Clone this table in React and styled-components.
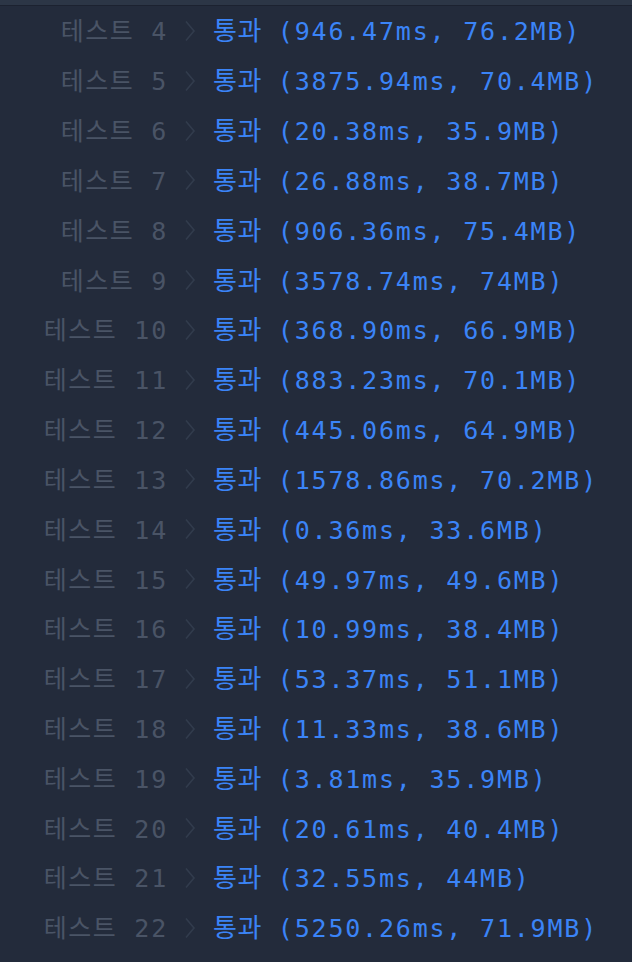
import React from "react";
import styled, { createGlobalStyle } from "styled-components";

const Global = createGlobalStyle`
  html, body { margin: 0; padding: 0; background: #232b3b; }
  body { font-family: "DejaVu Sans Mono", "Noto Sans CJK KR", monospace; }
`;

const Page = styled.div`
  width: 632px;
  min-height: 962px;
  background: #232b3b;
  overflow: hidden;
`;

const TopStrip = styled.div`
  height: 5px;
  background: #2c3646;
  border-bottom: 1px solid #1c2230;
`;

const List = styled.div`
  display: flex;
  flex-direction: column;
`;

const Row = styled.div`
  box-sizing: border-box;
  display: flex;
  align-items: center;
  height: 49.83px;
  font-size: 25px;
  line-height: 44px;
  white-space: nowrap;
`;

const Label = styled.div`
  width: 168px;
  flex: none;
  display: flex;
  justify-content: flex-end;
  align-items: baseline;
  color: #4a5466;
  letter-spacing: 1.8px;
`;

const Ko = styled.span`
  font-family: "Noto Sans CJK KR", sans-serif;
  font-size: ${(p) => p.$size ?? 24}px;
  letter-spacing: ${(p) => p.$ls ?? 1}px;
  margin-right: ${(p) => p.$mr ?? 0}px;
`;

const Chevron = styled.svg`
  width: 12px;
  height: 22px;
  margin: 0 17px 0 16px;
  flex: none;
`;

const Status = styled.div`
  display: flex;
  align-items: baseline;
  color: #3b84f7;
`;

const Detail = styled.span`
  letter-spacing: 1.8px;
`;

const rows = [
  [4, "946.47ms, 76.2MB"],
  [5, "3875.94ms, 70.4MB"],
  [6, "20.38ms, 35.9MB"],
  [7, "26.88ms, 38.7MB"],
  [8, "906.36ms, 75.4MB"],
  [9, "3578.74ms, 74MB"],
  [10, "368.90ms, 66.9MB"],
  [11, "883.23ms, 70.1MB"],
  [12, "445.06ms, 64.9MB"],
  [13, "1578.86ms, 70.2MB"],
  [14, "0.36ms, 33.6MB"],
  [15, "49.97ms, 49.6MB"],
  [16, "10.99ms, 38.4MB"],
  [17, "53.37ms, 51.1MB"],
  [18, "11.33ms, 38.6MB"],
  [19, "3.81ms, 35.9MB"],
  [20, "20.61ms, 40.4MB"],
  [21, "32.55ms, 44MB"],
  [22, "5250.26ms, 71.9MB"],
];

export default function App() {
  return (
    <Page>
      <Global />
      <TopStrip />
      <List>
        {rows.map(([n, d]) => (
          <Row key={n}>
            <Label>
              <Ko $size={25} $ls={1.5} $mr={17}>테스트</Ko>
              <span>{n}</span>
            </Label>
            <Chevron viewBox="0 0 12 22">
              <path d="M2 1.5 L10 11 L2 20.5" fill="none" stroke="#323c4d" strokeWidth="1.6" />
            </Chevron>
            <Status>
              <Ko $size={26} $ls={0.5} $mr={16}>통과</Ko>
              <Detail>({d})</Detail>
            </Status>
          </Row>
        ))}
      </List>
    </Page>
  );
}
